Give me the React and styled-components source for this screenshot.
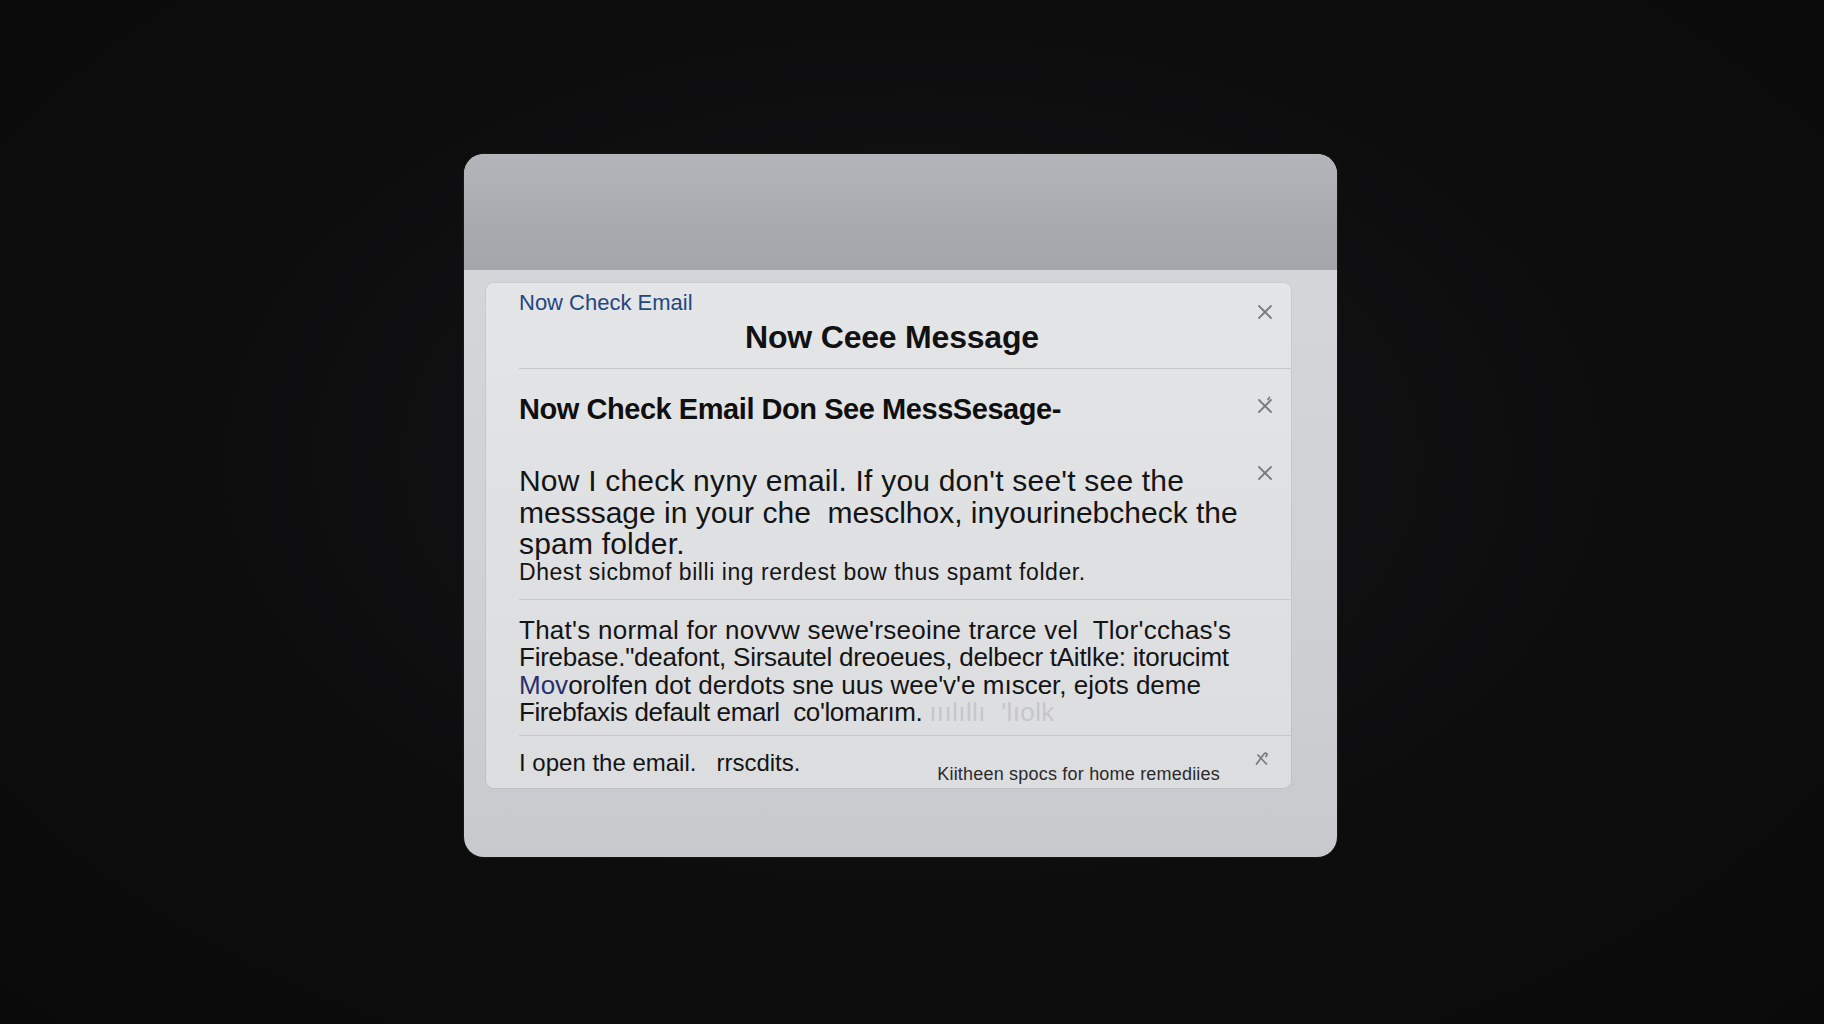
import React from 'react'
import styled, { createGlobalStyle } from 'styled-components';

const GlobalStyle = createGlobalStyle`
  html, body {
    margin: 0;
    padding: 0;
    background: #0c0c0d;
  }
  body {
    font-family: "Liberation Sans", Arial, sans-serif;
  }
`;

const Page = styled.div`
  width: 1824px;
  height: 1024px;
  box-sizing: border-box;
  padding: 154px 0 0 464px;
  background: radial-gradient(ellipse at 50% 45%, #151517 0%, #0d0d0e 55%, #0a0a0b 100%);
`;

const Card = styled.div`
  width: 873px;
  height: 703px;
  border-radius: 20px;
  overflow: hidden;
  display: flex;
  flex-direction: column;
  background: linear-gradient(180deg, #d6d7da 0%, #d0d1d4 60%, #c8c9cc 100%);
  box-shadow: 0 0 0 1px rgba(255, 255, 255, 0.04);
`;

const CardHeader = styled.div`
  height: 116px;
  flex-shrink: 0;
  background: linear-gradient(180deg, #b4b5ba 0%, #a9aaaf 60%, #a5a6ab 100%);
`;

const CardBody = styled.div`
  padding: 13px 46px 0 22px;
`;

const Panel = styled.div`
  height: 505px;
  box-sizing: border-box;
  border-radius: 8px;
  background: linear-gradient(180deg, #e4e5e7 0%, #dfe0e2 55%, #dcdddf 100%);
  box-shadow: 0 0 0 1px rgba(0, 0, 0, 0.05);
  display: flex;
  flex-direction: column;
`;

const Row = styled.div`
  margin-left: 33px;
  display: grid;
  grid-template-columns: 1fr 40px;
  align-items: start;
  padding: ${({ pad }) => pad};
  border-bottom: ${({ divider }) => (divider ? '1.5px solid #c7c8cb' : 'none')};
`;

const Content = styled.div`
  min-width: 0;
`;

const Kicker = styled.div`
  font-size: 22px;
  line-height: 25px;
  color: #234880;
`;

const Title = styled.div`
  margin-top: 3px;
  padding-left: 14px;
  font-size: 32px;
  line-height: 38px;
  font-weight: 700;
  color: #111;
  text-align: center;
  letter-spacing: -0.2px;
`;

const Subject = styled.div`
  font-size: 29px;
  line-height: 35px;
  font-weight: 700;
  color: #0f0f10;
  letter-spacing: -0.45px;
  white-space: nowrap;
`;

const Line = styled.div`
  font-size: ${({ size }) => size}px;
  line-height: ${({ lh }) => lh}px;
  letter-spacing: ${({ ls }) => ls || 0}px;
  color: #141415;
  white-space: nowrap;
`;

const Accent = styled.span`
  color: #2a2f6e;
`;

const Faded = styled.span`
  color: #c6c7ca;
  letter-spacing: 0.4px;
`;

const FooterLine = styled.div`
  display: flex;
  align-items: flex-start;
`;

const Note = styled.div`
  margin-left: auto;
  margin-top: 15px;
  padding-right: 31px;
  font-size: 18px;
  line-height: 20px;
  letter-spacing: 0.2px;
  color: #2a2a2c;
  white-space: nowrap;
`;

const Close = styled.button`
  justify-self: end;
  margin-top: ${({ top }) => top}px;
  margin-right: ${({ right }) => right || 19}px;
  width: 14px;
  height: 14px;
  padding: 0;
  border: 0;
  background: none;
  display: flex;
  cursor: pointer;
  svg { display: block; }
`;

const CloseIcon = ({ variant }) => (
  <svg width="14" height="14" viewBox="0 0 14 14" fill="none" stroke="#7c7c7e" strokeWidth="1.8" strokeLinecap="round" overflow="visible">
    {variant === 'hook' ? (
      <>
        <path d="M1.5 14 L9 4 C10.5 2 13.5 3.5 11 6.5" />
        <path d="M3 5 L11.5 14" />
      </>
    ) : (
      <>
        <path d="M1 1 L13 13" />
        <path d="M13 1 L1 13" />
        {variant === 'tick' && <path d="M10 0.5 L11.5 -1.5" />}
      </>
    )}
  </svg>
);

const App = () => {
  return (
    <>
      <GlobalStyle />
      <Page>
        <Card>
          <CardHeader />
          <CardBody>
            <Panel>
              <Row divider pad="7px 0 12px 0">
                <Content>
                  <Kicker>Now Check Email</Kicker>
                  <Title>Now Ceee Message</Title>
                </Content>
                <Close top={15} aria-label="Close"><CloseIcon /></Close>
              </Row>

              <Row pad="23px 0 38px 0">
                <Content>
                  <Subject>Now Check Email Don See MessSesage-</Subject>
                </Content>
                <Close top={7} aria-label="Close"><CloseIcon variant="tick" /></Close>
              </Row>

              <Row divider pad="0 0 15px 0">
                <Content>
                  <Line size={30} lh={31.5} ls={0.2}>Now I check nyny email. If you don't see't see the</Line>
                  <Line size={30} lh={31.5}>messsage in your che&nbsp; mesclhox, inyourinebcheck the</Line>
                  <Line size={30} lh={31.5} ls={0.2}>spam folder.</Line>
                  <Line size={23} lh={24} ls={0.55}>Dhest sicbmof billi ing rerdest bow thus spamt folder.</Line>
                </Content>
                <Close top={1} aria-label="Close"><CloseIcon /></Close>
              </Row>

              <Row divider pad="17px 0 8px 0">
                <Content>
                  <Line size={26} lh={27.5} ls={0.25}>That's normal for novvw sewe'rseoine trarce vel&nbsp; Tlor'cchas's</Line>
                  <Line size={26} lh={27.5} ls={-0.25}>Firebase."deafont, Sirsautel dreoeues, delbecr tAitlke: itorucimt</Line>
                  <Line size={26} lh={27.5}><Accent>Mov</Accent>orolfen dot derdots sne uus wee'v'e mıscer, ejots deme</Line>
                  <Line size={26} lh={27.5} ls={-0.4}>Firebfaxis default emarl&nbsp; co'lomarım. <Faded>ııılıllı&nbsp; 'lıolk</Faded></Line>
                </Content>
              </Row>

              <Row pad="13px 0 0 0">
                <FooterLine>
                  <Line size={24} lh={28}>I open the email.&nbsp;&nbsp; rrscdits.</Line>
                  <Note>Kiitheen spocs for home remediies</Note>
                </FooterLine>
                <Close top={1} right={22} aria-label="Close"><CloseIcon variant="hook" /></Close>
              </Row>
            </Panel>
          </CardBody>
        </Card>
      </Page>
    </>
  )
}

export default App
